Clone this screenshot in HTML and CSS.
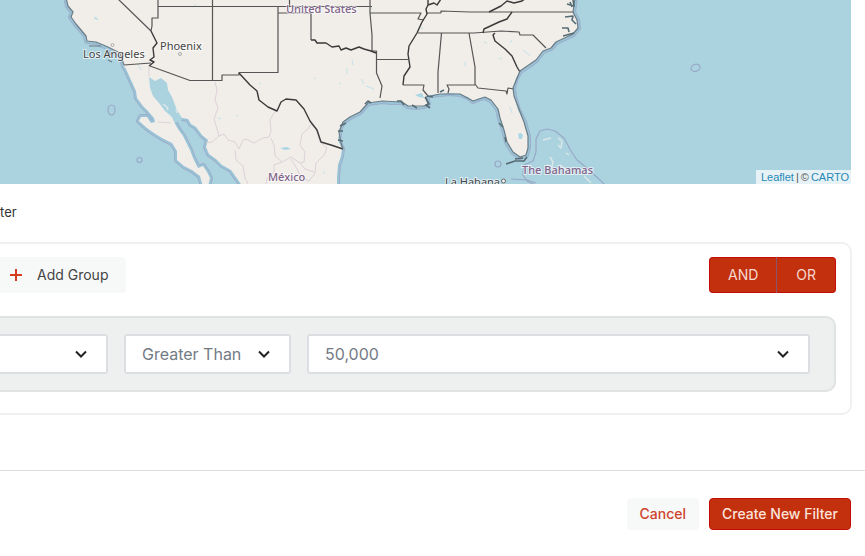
FILE: index.html
```html
<!DOCTYPE html>
<html lang="en">
<head>
<meta charset="utf-8">
<meta name="viewport" content="width=device-width, initial-scale=1">
<title>Create filter</title>
<link rel="stylesheet" href="styles.css">
</head>
<body>
<main class="page">
  <section class="map" aria-label="Map">
    <svg class="map-canvas" viewBox="0 0 851 184" preserveAspectRatio="xMaxYMin slice" aria-hidden="true">
      <defs>
        <path id="shore" d="M66 -3L68 6 73 12 71 17 76 24 82 31 86 36 87 41 96 42 102 45 108 47 114 51 120 55 123 62 124 66 126 69 131 80 136 91 137 98 143 106 148 111 154 118 155 122 151 123 147 117 141 117 139 121 147 128 154 133 162 138 172 143 177 151 177 160 184 166 192 170 200 176 203 187M208 187L210 178 207 172 203 166 198 168 193 158 190 150 187 144 183 136 178 129 175 123M182 118L188 119 191 124 196 127 202 135 208 140 206 147 209 154 216 159 222 165 231 170 243 187M337 187L337 178 338 165 341 156 342 149 338 140 340 128 343 122 350 117 360 112 368 103 376 102 382 101 391 102 402 102 408 106 416 107 424 106 428 104 426 97 430 95 440 94 450 93 460 94 468 97 473 101 480 98 485 97 491 100 498 109 500 118 504 130 507 142 513 152 520 157 526 155 528 148 528 136 524 122 518 110 514 96 513 88 516 78 520 71 528 66 536 60 543 51 551 48 556 42 565 38 573 34 578 28 577 20 573 12 574 5 575 -3"/>
      </defs>
      <use class="shelf" href="#shore"/>
      <use class="shallows" href="#shore"/>
      <path class="land" d="M66 -3L68 6 73 12 71 17 76 24 82 31 86 36 87 41 96 42 102 45 108 47 114 51 120 55 123 62 124 66 126 69 131 80 136 91 137 98 143 106 148 111 154 118 155 122 151 123 147 117 141 117 139 121 147 128 154 133 162 138 172 143 177 151 177 160 184 166 192 170 200 176 203 187 208 187 210 178 207 172 203 166 198 168 193 158 190 150 187 144 183 136 178 129 174 122 172 117 165 111 159 103 153 96 150 88 149 77 155 81 161 78 167 83 168 90 172 97 175 105 177 110 182 118 188 119 191 124 196 127 202 135 208 140 206 147 209 154 216 159 222 165 231 170 243 187 337 187 337 178 338 165 341 156 342 149 338 140 340 128 343 122 350 117 360 112 368 103 376 102 382 101 391 102 402 102 408 106 416 107 424 106 428 104 426 97 430 95 440 94 450 93 460 94 468 97 473 101 480 98 485 97 491 100 498 109 500 118 504 130 507 142 513 152 520 157 526 155 528 148 528 136 524 122 518 110 514 96 513 88 516 78 520 71 528 66 536 60 543 51 551 48 556 42 565 38 573 34 578 28 577 20 573 12 574 5 575 -3Z"/>
      <g class="water">
        <path d="M518 134l3-1 2 2-1 4-3 0zM280 148l7-1 4 2-6 1zM415 95l7-2 2 5-5-1zM94 17l3 1 1 2-3-1z"/>
        <path class="ponds" d="M371 6l1 3M196 4l-2 2M361 79l3 5M366 86l8 3M352 60l1 5M347 68v6M314 78l2 1M339 83l2 1M236 115l2 1M259 83l2 1M324 171v3M218 118l3 1M138 65l3 5M484 42l3 1M510 107l2 6M523 50l4 3 3 3M512 40l-2 3M502 58l-3 1M465 62v4M421 28l2 1"/>
      </g>
      <path class="gulf-isles" d="M163 104l4 3 1 3M176 109l1 4"/>
      <g class="provinces">
        <path d="M215 82L217 90 215 100 218 108 214 119 217 129 219 136M149 67L149 76M158 122L171 123M219 136L212 142 206 143M219 136L224 134 228 140 235 142 239 149 243 140 246 139 254 143 263 138 269 137 271 131 270 120 274 113 277 109M271 138L274 145 275 156 282 162 291 157 300 163 304 162 305 152 300 145 302 134 308 129 311 124 316 129M235 150L236 160 243 166 245 178 248 184M282 162L274 165 274 172 267 178 266 184M316 129L320 142 327 148 324 155 316 163 315 173 309 181 301 177 297 169 291 159M300 163L305 169 314 172"/>
      </g>
      <g class="sea-lines">
        <path d="M539 187L527 181 523 175 524 165 533 161 536 152 536 139 540 131 547 129 555 131 564 138 571 151 577 160 588 169 600 180 607 187M511 179L527 180 536 183"/>
        <ellipse cx="111.500" cy="110" rx="3.500" ry="5"/><circle cx="139.500" cy="160" r="2.500"/>
        <ellipse cx="695.500" cy="68" rx="4.500" ry="3.500" transform="rotate(-20 695 68)"/>
        <circle cx="498" cy="164" r="3"/>
      </g>
      <path class="isles" d="M543 140l8-2M558 138l4 3-1 7-3-3M550 157l3 5-1 5-5-2M566 153l3 2M560 165l12 8M584 176l7 7"/>
      <g class="borders">
        <path d="M117 -2L151 31M158 -2L158 18 152 18 152 26 151 31M158 6.500H372M212.500 -2V80.500M150 66L190 80.500H222V75H239V72.500H278V6.500M278 13H311V40M289.500 -2V6.500M370 -2V13L372 35 372 51M370 13H421L418 19 424 20M441 13L427 13M124 65L151 63M372 51H376.500V73L382 86 380 98M376 59.500H408M418 33H474L501 31 519 32 520 35 533 35 546 48M441.500 33L438 72 438 93M403 85H424L423 90 428 96M448 93L449 89 447 85H475M441 13V11L470 12H574M469 33L475 67 475 84 478 88 506 91 507 94 508 88 514 89"/>
        <path class="rivers" d="M311 40L315 40 317 43 326 43 332 47 339 46 341 50 346 48 351 50 359 47 364 49 371 51 376 53M151 31L157 43 153 48 154 57 150 60 154 62 149 66M239 73L250 85 257 91 259 100 268 107 277 111 281 102 286 99 296 100 304 109 310 121 317 130 321 142 331 145 343 149M428 -2L428 5 426 9 427 14 422 22 417 33 409 46 408 54 410 67 404 76 403 85M428 5L434 3 437 5 441 -1M483 33L484 29 499 22 507 19 512 12M489 12L501 6 507 1 514 3 522 1 526 -2M495 33L493 35 495 41 505 49 512 56 517 67 520 72"/>
      </g>
      <path class="coast" d="M66 -2L68 6 73 12 71 17 76 24 86 36 87 41 96 42 108 47 120 53 124 65M89 46L101 46M108 52l3 3M108 60l4 2M343 149L341 143 339 132 343 122 350 117 360 112 368 103 382 101 402 102 408 106 424 106 428 104 426 97 440 94 460 94 473 101 485 97 491 100 498 109 500 118 504 130 507 142 513 152 520 157 526 155 528 148 528 136 524 122 514 96 513 88 520 71 536 60 543 51 551 48 556 42 573 34 578 28 577 20 573 12 574 5 575 -2"/>
      <path class="inlets" d="M340 126l6-3M338 131l5 0M338 140l5 1M365 104l3-3 3 2M397 101l4 0 3 4M412 105l5 3M425 97l4 7-3 1 4 3M427 96l6 1M440 92l4-2M499 123l4 4M505 137l1 5M506 164l9-3 9 0 3-4M515 159l8-1M567 4l7 2-1-6M565 17l8-1-1 4 4 4M562 28l6 0 1 4M563 36l11-3M570 2l2 5"/>
      <circle class="town" cx="180" cy="54" r="1.500"/><circle class="town" cx="112.500" cy="45" r="1.500"/><circle class="town capital" cx="503.500" cy="181" r="2"/>
      <g class="labels">
        <text x="83" y="58">Los Angeles</text>
        <text x="160" y="50">Phoenix</text>
        <text class="country" x="286" y="13">United States</text>
        <text class="country" x="268" y="181">México</text>
        <text class="country" x="522" y="174">The Bahamas</text>
        <text x="445" y="186">La Habana</text>
      </g>
    </svg>
    <div class="attribution"><a href="#">Leaflet</a><span>|</span><span>©</span><a href="#">CARTO</a></div>
  </section>

  <h2 class="title">ter</h2>

  <section class="builder">
    <div class="toolbar">
      <button class="add" type="button">
        <svg class="plus" viewBox="0 0 12 12" aria-hidden="true"><path d="M6 0V12M0 6H12"/></svg>
        Add Group
      </button>
      <div class="logic">
        <button type="button">AND</button>
        <button type="button">OR</button>
      </div>
    </div>
    <div class="rule">
      <div class="field field-name">
        <select aria-label="Field"><option></option></select>
        <svg class="chevron" viewBox="0 0 12 8" aria-hidden="true"><path d="M1 1.500L6 6.500 11 1.500"/></svg>
      </div>
      <div class="field field-operator">
        <select aria-label="Operator"><option>Greater Than</option></select>
        <svg class="chevron" viewBox="0 0 12 8" aria-hidden="true"><path d="M1 1.500L6 6.500 11 1.500"/></svg>
      </div>
      <div class="field field-value">
        <select aria-label="Value"><option>50,000</option></select>
        <svg class="chevron" viewBox="0 0 12 8" aria-hidden="true"><path d="M1 1.500L6 6.500 11 1.500"/></svg>
      </div>
    </div>
  </section>

  <footer class="actions">
    <button class="cancel" type="button">Cancel</button>
    <button class="create" type="button">Create New Filter</button>
  </footer>
</main>
</body>
</html>
```
FILE: styles.css
```css
* {
  box-sizing: border-box;
}

body {
  margin: 0;
  background: #fff;
  color: #333;
  font-family: Inter, "Liberation Sans", sans-serif;
  font-size: 14px;
  line-height: 20px;
}

button,
select {
  margin: 0;
  font: inherit;
}

.map {
  position: relative;
  height: 184px;
  margin-right: 14px;
  overflow: hidden;
  background: #abd3df;
}

.map-canvas {
  display: block;
  width: 100%;
  height: 100%;
}

.map-canvas path,
.map-canvas ellipse,
.map-canvas circle {
  fill: none;
  stroke-linejoin: round;
}

.map-canvas .shelf {
  stroke: #9dafca;
  stroke-width: 6;
}

.map-canvas .shallows {
  stroke: #98c2d6;
  stroke-width: 4;
}

.map-canvas .land {
  fill: #f1eee9;
}

.map-canvas .water path {
  fill: #abd7e5;
}

.map-canvas .water .ponds {
  fill: none;
  stroke: #c4e2e8;
  stroke-width: 1;
}

.map-canvas .gulf-isles,
.map-canvas .isles {
  stroke: #d9e6e8;
  stroke-width: 1.5;
}

.provinces path {
  stroke: #dcd1d9;
  stroke-width: 1;
}

.map-canvas .sea-lines * {
  stroke: #98a9c7;
  stroke-width: 1.2;
}

.borders path {
  stroke: #555;
  stroke-width: 1.2;
}

.borders .rivers {
  stroke: #3a3a3a;
  stroke-width: 1.4;
}

.map-canvas .coast {
  stroke: #6b7c86;
  stroke-width: 1.2;
}

.map-canvas .inlets {
  stroke: #566c74;
  stroke-width: 1.6;
}

.map-canvas .town {
  fill: #f4f2ee;
  stroke: #aaa;
  stroke-width: 1;
}

.map-canvas .capital {
  stroke: #666;
}

.labels text {
  fill: #444;
  stroke: rgba(255, 255, 255, 0.65);
  stroke-width: 2;
  paint-order: stroke;
  font-family: "Noto Sans", sans-serif;
  font-size: 11px;
}

.labels .country {
  fill: #80638a;
  font-weight: 500;
}

.attribution {
  display: flex;
  gap: 2px;
  position: absolute;
  right: 0;
  bottom: 0;
  padding: 0 2px 0 5px;
  background: rgba(255, 255, 255, 0.7);
  color: #555;
  font-family: "Liberation Sans", Arial, sans-serif;
  font-size: 11px;
  line-height: 14px;
}

.attribution a {
  color: #2789b5;
  text-decoration: none;
}

.title {
  margin: 18px 0 20px;
  font-size: 13px;
  font-weight: 400;
  line-height: 20px;
}

.builder {
  margin-right: 13px;
  padding: 13px 14px 21px 0;
  border: 2px solid #eff1f1;
  border-left: 0;
  border-radius: 0 10px 10px 0;
}

.toolbar {
  display: flex;
  align-items: center;
  justify-content: space-between;
}

.add {
  display: flex;
  align-items: center;
  gap: 15px;
  height: 36px;
  padding: 0 18px 0 10px;
  border: 0;
  border-radius: 0 4px 4px 0;
  background: #f7f9f9;
  color: #444;
}

.plus {
  width: 12px;
  height: 12px;
}

.plus path {
  stroke: #d43f20;
  stroke-width: 2;
}

.logic {
  display: flex;
}

.logic button {
  height: 36px;
  padding: 0 18px;
  border: 1px solid #c40d06;
  border-right: 0;
  border-radius: 4px 0 0 4px;
  background: #c2300e;
  color: #f6d9d2;
}

.logic button + button {
  padding: 0 19px;
  border-right: 1px solid #c40d06;
  border-left: 1px solid #895469;
  border-radius: 0 4px 4px 0;
}

.rule {
  display: flex;
  gap: 16px;
  margin-top: 23px;
  padding: 16px 24px 16px 0;
  border: 2px solid #e0e3e2;
  border-left: 0;
  border-radius: 0 10px 10px 0;
  background: #eef0f0;
}

.field {
  display: flex;
  align-items: center;
  position: relative;
}

.field-name {
  flex: 0 0 108px;
}

.field-operator {
  flex: 0 0 167px;
}

.field-value {
  flex: 1;
}

.field select {
  width: 100%;
  height: 40px;
  padding: 0 36px 0 16px;
  appearance: none;
  border: 2px solid #dcdee2;
  border-radius: 3px;
  background: #fff;
  color: #737b85;
  font-size: 16px;
}

.field-name select {
  border-left: 0;
  border-radius: 0 3px 3px 0;
}

.chevron {
  position: absolute;
  right: 21px;
  width: 12px;
  height: 8px;
  pointer-events: none;
}

.chevron path {
  fill: none;
  stroke: #222;
  stroke-width: 2;
}

.actions {
  display: flex;
  justify-content: flex-end;
  gap: 10px;
  margin-top: 55px;
  padding: 27px 14px;
  border-top: 1px solid #dcdfdf;
}

.actions button {
  height: 32px;
  padding: 0 12px;
  border: 1px solid #f7f9f9;
  border-radius: 4px;
  background: #f7f9f9;
  color: #d0432b;
  font-weight: 500;
}

.actions .create {
  border-color: #c40d06;
  background: #c2300e;
  color: #fbe3dc;
}
```
